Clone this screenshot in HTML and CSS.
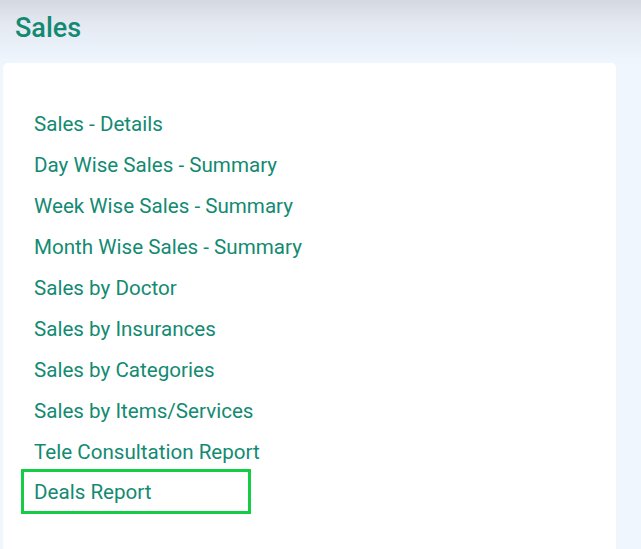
FILE: index.html
```html
<!DOCTYPE html>
<html>
<head>
<meta charset="utf-8">
<link rel="stylesheet" href="styles.css">
</head>
<body>
<div class="page">
  <header class="top">
    <h1 class="title">Sales</h1>
  </header>
  <section class="card">
    <ul class="links">
      <li><a class="link">Sales - Details</a></li>
      <li><a class="link">Day Wise Sales - Summary</a></li>
      <li><a class="link">Week Wise Sales - Summary</a></li>
      <li><a class="link">Month Wise Sales - Summary</a></li>
      <li><a class="link">Sales by Doctor</a></li>
      <li><a class="link">Sales by Insurances</a></li>
      <li><a class="link">Sales by Categories</a></li>
      <li><a class="link">Sales by Items/Services</a></li>
      <li><a class="link">Tele Consultation Report</a></li>
      <li><a class="link highlight">Deals Report</a></li>
    </ul>
  </section>
</div>
</body>
</html>
```
FILE: styles.css
```css
html, body {
  margin: 0;
  padding: 0;
  height: 100%;
}
body {
  background: #eff6fe;
  font-family: Roboto, "Liberation Sans", sans-serif;
  overflow: hidden;
}
.page {
  min-height: 100%;
  background: linear-gradient(to bottom, #d4d8e1 0px, #e4e9f2 25px, #eef5fd 60px, #eff6fe 100%);
  background-repeat: no-repeat;
  background-size: 100% 70px;
  background-color: #eff6fe;
}
.top {
  height: 63px;
  padding-left: 15px;
  box-sizing: border-box;
}
.title {
  margin: 0;
  padding-top: 12px;
  font-size: 27px;
  line-height: 32px;
  font-weight: 500;
  color: #128a72;
}
.card {
  margin-left: 3px;
  width: 613px;
  background: #ffffff;
  border-radius: 5px 5px 0 0;
  padding: 41px 0 40px 18px;
  box-sizing: border-box;
  min-height: 500px;
}
.links {
  list-style: none;
  margin: 0;
  padding: 0;
}
.links li {
  height: 41px;
}
.link {
  display: block;
  padding-left: 13px;
  line-height: 41px;
  font-size: 20.6px;
  color: #138a72;
  text-decoration: none;
}
.highlight {
  box-sizing: border-box;
  width: 230px;
  height: 45px;
  line-height: 41px;
  margin-top: -4px;
  padding-left: 10px;
  border: 3px solid #14cc46;
}
```
